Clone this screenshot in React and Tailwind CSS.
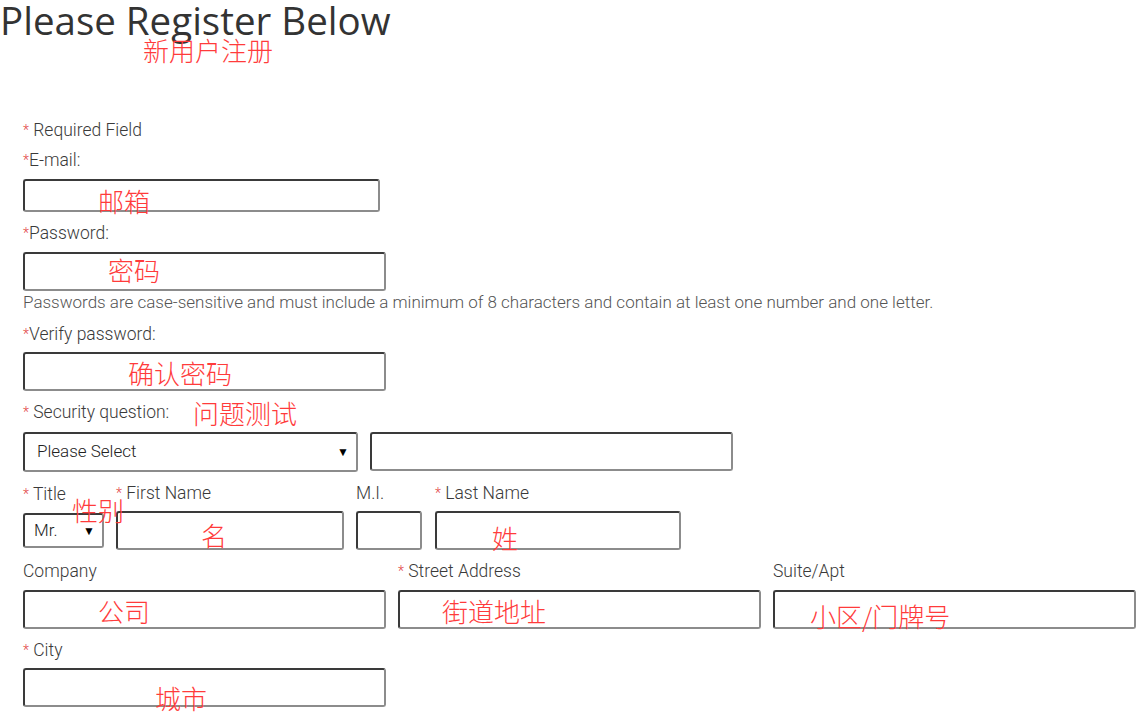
import React from "react";

const labelFont = { fontFamily: "Roboto, 'Noto Sans', sans-serif" };

function Star() {
  return <span className="text-[#e24444] text-[14px] align-top">*</span>;
}

function Field({ className = "", h = 39 }) {
  return (
    <div
      className={`rounded-[3px] border-2 border-t-[#3a3a3a] border-l-[#3a3a3a] border-b-[#8c8c8c] border-r-[#8c8c8c] bg-white ${className}`}
      style={{ height: h }}
    />
  );
}

function FakeSelect({ text, className = "" }) {
  return (
    <div
      className={`flex items-center justify-between rounded-[3px] border-2 border-t-[#3a3a3a] border-l-[#3a3a3a] border-b-[#8c8c8c] border-r-[#8c8c8c] bg-white text-[17px] font-light text-[#222] ${className}`}
    >
      <span>{text}</span>
      <span className="text-[12px] text-black">▼</span>
    </div>
  );
}

function Label({ req, space = true, children, className = "" }) {
  return (
    <div className={`h-[20px] leading-[20px] text-[17.5px] text-[#3a3a3a] font-light whitespace-nowrap ${className}`}>
      {req && <Star />}
      {req && space && " "}
      {children}
    </div>
  );
}

const notes = [
  { t: "新用户注册", x: 143, y: 36 },
  { t: "邮箱", x: 98, y: 187 },
  { t: "密码", x: 108, y: 256 },
  { t: "确认密码", x: 128, y: 359 },
  { t: "问题测试", x: 193, y: 399 },
  { t: "性别", x: 72, y: 496 },
  { t: "名", x: 201, y: 521 },
  { t: "姓", x: 492, y: 524 },
  { t: "公司", x: 98, y: 597 },
  { t: "街道地址", x: 442, y: 597 },
  { t: "小区/门牌号", x: 810, y: 602 },
  { t: "城市", x: 155, y: 684 },
];

export default function App() {
  return (
    <div className="relative w-[1141px] h-[720px] overflow-hidden bg-white">
      <h1
        className="text-[38.5px] leading-[40px] text-[#333] m-0 whitespace-nowrap"
        style={{ fontFamily: "'Open Sans', 'Noto Sans', sans-serif" }}
      >
        Please Register Below
      </h1>

      <div className="pl-[23px] pt-[80px]" style={labelFont}>
        <Label req>Required Field</Label>

        <Label req space={false} className="mt-[10px]">E-mail:</Label>
        <Field className="mt-[9px] w-[357px]" h={33} />

        <Label req space={false} className="mt-[11px]">Password:</Label>
        <Field className="mt-[9px] w-[363px]" />
        <div className="mt-[1px] h-[20px] leading-[20px] text-[17px] text-[#555] font-light whitespace-nowrap">
          Passwords are case-sensitive and must include a minimum of 8 characters and contain at least one number and one letter.
        </div>

        <Label req space={false} className="mt-[12px]">Verify password:</Label>
        <Field className="mt-[8px] w-[363px]" />

        <Label req className="mt-[11px]">Security question:</Label>
        <div className="mt-[10px] flex gap-[12px]">
          <FakeSelect text="Please Select" className="w-[335px] h-[40px] pl-[12px] pr-[7px]" />
          <Field className="w-[363px]" />
        </div>

        <div className="mt-[11px] flex gap-[12px]">
          <div className="w-[81px]">
            <Label req className="mt-[1px]">Title</Label>
            <FakeSelect text="Mr." className="mt-[9px] h-[35px] pl-[9px] pr-[7px]" />
          </div>
          <div className="w-[228px]">
            <Label req>First Name</Label>
            <Field className="mt-[8px]" />
          </div>
          <div className="w-[66px]">
            <Label>M.I.</Label>
            <Field className="mt-[8px]" />
          </div>
          <div className="w-[246px] ml-[1px]">
            <Label req>Last Name</Label>
            <Field className="mt-[8px]" />
          </div>
        </div>

        <div className="mt-[11px] grid grid-cols-[363px_363px_363px] gap-x-[12px]">
          <div>
            <Label>Company</Label>
            <Field className="mt-[9px]" />
          </div>
          <div>
            <Label req>Street Address</Label>
            <Field className="mt-[9px]" />
          </div>
          <div>
            <Label>Suite/Apt</Label>
            <Field className="mt-[9px]" />
          </div>
        </div>

        <Label req className="mt-[11px]">City</Label>
        <Field className="mt-[8px] w-[363px]" />
      </div>

      {notes.map((n) => (
        <div
          key={n.t}
          className="absolute text-[26px] leading-[28px] text-[#ff3b3b] whitespace-nowrap font-light pointer-events-none"
          style={{ left: n.x, top: n.y, fontFamily: "'Noto Sans CJK SC', sans-serif" }}
        >
          {n.t}
        </div>
      ))}
    </div>
  );
}
